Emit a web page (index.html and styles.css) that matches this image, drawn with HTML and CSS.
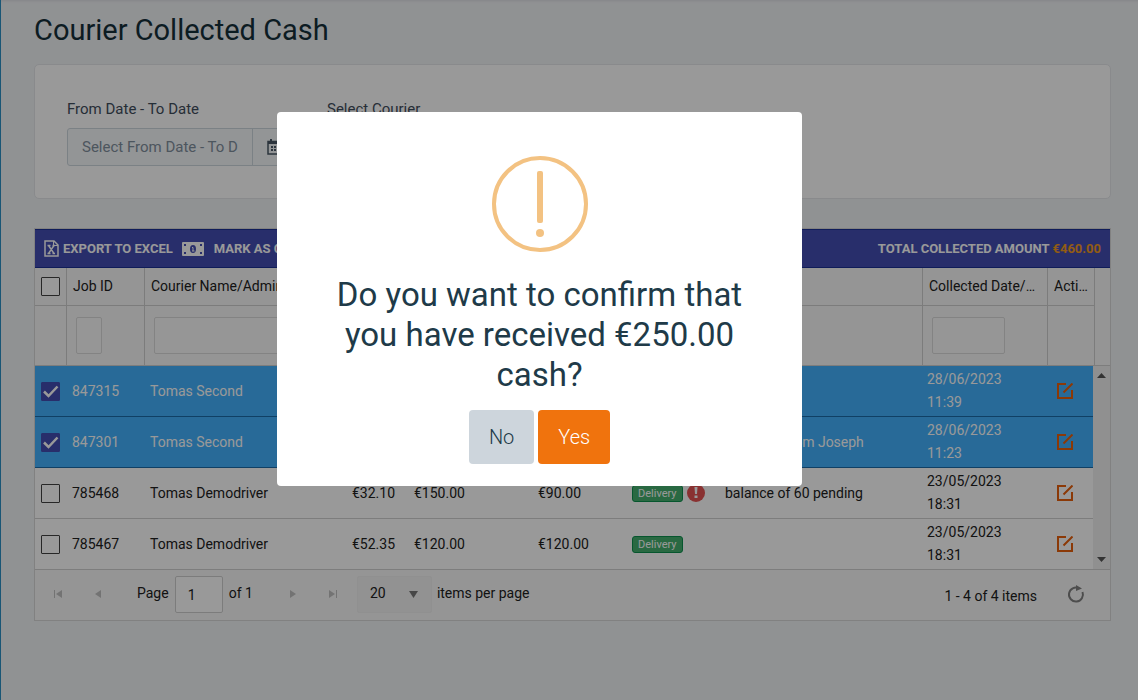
FILE: index.html
```html
<!DOCTYPE html>
<html lang="en">
<head>
<meta charset="utf-8">
<meta name="viewport" content="width=device-width, initial-scale=1">
<title>Courier Collected Cash</title>
<link rel="stylesheet" href="styles.css">
</head>
<body>
<svg class="sprite" aria-hidden="true">
  <symbol id="edit" viewBox="0 0 16 16"><path d="M9 1H1v14h14V7M6.500 9.500l9-9" fill="none" stroke="currentColor" stroke-width="2"/></symbol>
  <symbol id="prev" viewBox="0 0 16 16"><path d="M11 4v8L5 8z" fill="currentColor"/></symbol>
  <symbol id="first" viewBox="0 0 16 16"><path d="M12 4v8L6 8zM4 4h1v8H4z" fill="currentColor"/></symbol>
</svg>
<main class="page">
  <h1 class="title">Courier Collected Cash</h1>

  <form class="card filters">
    <div class="field">
      <label for="dates">From Date - To Date</label>
      <div class="date-group">
        <input id="dates" class="date-input" type="text" placeholder="Select From Date - To Date">
        <button class="date-btn" type="button" aria-label="Open calendar">
          <svg width="15" height="16" viewBox="0 0 15 16"><path d="M1 2.500h13v12.500H1z" fill="none" stroke="currentColor" stroke-width="1.500"/><path d="M1 2h13v3H1zM3 0h2v3H3zM10 0h2v3h-2zM4 7h2v2H4zM7 7h2v2H7zM10 7h2v2h-2zM4 10h2v2H4zM7 10h2v2H7zM10 10h2v2h-2z" fill="currentColor"/></svg>
        </button>
      </div>
    </div>
    <div class="field">
      <label for="courier">Select Courier</label>
      <select id="courier" class="courier"><option></option></select>
    </div>
    <button class="search" type="button" aria-label="Search"></button>
  </form>

  <section class="grid">
    <div class="toolbar">
      <button class="tool" type="button">
        <svg width="15" height="17" viewBox="0 0 15 17"><path d="M1 1h9l4 4v11H1z" fill="none" stroke="currentColor" stroke-width="1.500"/><path d="M9.500 1v4.500H14" fill="none" stroke="currentColor"/><path d="M4.500 5.500l5.500 8M10 5.500l-5.500 8M3.500 5.500h3M8.500 5.500h2.500M3.500 13.500h3M8.500 13.500h2.500" fill="none" stroke="currentColor" stroke-width="1.400"/></svg>
        Export to Excel
      </button>
      <button class="tool tool-cash" type="button">
        <svg width="22" height="14" viewBox="0 0 22 14"><rect width="22" height="14" rx="1" fill="currentColor"/><ellipse cx="11" cy="7" rx="3" ry="4" fill="#434eb2"/><path d="M10 5.500h1V9M10 9h2.500" fill="none" stroke="currentColor"/><path d="M2 2h2v2H2zM18 2h2v2h-2zM2 10h2v2H2zM18 10h2v2h-2z" fill="#434eb2"/></svg>
        Mark as Collected
      </button>
      <div class="total">Total Collected Amount <span class="amount">€460.00</span></div>
    </div>

    <div class="head-wrap">
      <table class="tbl">
        <colgroup><col class="c-check"><col class="c-id"><col class="c-name"><col class="c-a"><col class="c-b"><col class="c-c"><col class="c-type"><col class="c-note"><col class="c-date"><col class="c-act"></colgroup>
        <thead>
          <tr class="heads">
            <th><input class="check" type="checkbox" aria-label="Select all"></th>
            <th>Job ID</th><th>Courier Name/Admin</th><th></th><th></th><th></th><th></th><th></th><th>Collected Date/Time</th><th>Action</th>
          </tr>
          <tr class="filter-row">
            <td></td>
            <td><input class="filter filter-id" type="text" aria-label="Filter Job ID"></td>
            <td><input class="filter" type="text" aria-label="Filter courier name"></td>
            <td></td><td></td><td></td><td></td><td></td>
            <td><input class="filter filter-date" type="text" aria-label="Filter collected date"></td>
            <td></td>
          </tr>
        </thead>
      </table>
    </div>

    <div class="body-wrap">
      <table class="tbl rows">
        <colgroup><col class="c-check"><col class="c-id"><col class="c-name"><col class="c-a"><col class="c-b"><col class="c-c"><col class="c-type"><col class="c-note"><col class="c-date"><col class="c-act"></colgroup>
        <tbody>
          <tr class="selected">
            <td><input class="check" type="checkbox" checked aria-label="Select 847315"></td><td>847315</td><td>Tomas Second</td><td></td><td></td><td></td><td></td><td></td>
            <td class="date">28/06/2023 11:39</td><td class="act"><a href="#" aria-label="Edit 847315"><svg width="16" height="16"><use href="#edit"/></svg></a></td>
          </tr>
          <tr class="selected">
            <td><input class="check" type="checkbox" checked aria-label="Select 847301"></td><td>847301</td><td>Tomas Second</td><td></td><td></td><td></td><td></td><td>Received from Joseph</td>
            <td class="date">28/06/2023 11:23</td><td class="act"><a href="#" aria-label="Edit 847301"><svg width="16" height="16"><use href="#edit"/></svg></a></td>
          </tr>
          <tr>
            <td><input class="check" type="checkbox" aria-label="Select 785468"></td><td>785468</td><td>Tomas Demodriver</td><td>€32.10</td><td>€150.00</td><td>€90.00</td>
            <td><div class="type"><span class="badge">Delivery</span><svg width="18" height="18" viewBox="0 0 18 18"><circle cx="9" cy="9" r="9" fill="#e55353"/><path d="M7.500 3h3l-.5 7H8zM7.500 11.500h3v2.500h-3z" fill="#fff"/></svg></div></td>
            <td>balance of 60 pending</td>
            <td class="date">23/05/2023 18:31</td><td class="act"><a href="#" aria-label="Edit 785468"><svg width="16" height="16"><use href="#edit"/></svg></a></td>
          </tr>
          <tr>
            <td><input class="check" type="checkbox" aria-label="Select 785467"></td><td>785467</td><td>Tomas Demodriver</td><td>€52.35</td><td>€120.00</td><td>€120.00</td>
            <td><div class="type"><span class="badge">Delivery</span></div></td><td></td>
            <td class="date">23/05/2023 18:31</td><td class="act"><a href="#" aria-label="Edit 785467"><svg width="16" height="16"><use href="#edit"/></svg></a></td>
          </tr>
        </tbody>
      </table>
      <div class="scroll" aria-hidden="true">
        <svg width="9" height="5" viewBox="0 0 9 5"><path d="M0 5h9L4.500 0z" fill="currentColor"/></svg>
        <svg width="9" height="5" viewBox="0 0 9 5"><path d="M0 0h9L4.500 5z" fill="currentColor"/></svg>
      </div>
    </div>

    <div class="pager">
      <button class="nav" type="button" aria-label="First page"><svg width="16" height="16"><use href="#first"/></svg></button>
      <button class="nav" type="button" aria-label="Previous page"><svg width="16" height="16"><use href="#prev"/></svg></button>
      <label class="page-label" for="pageno">Page</label>
      <input id="pageno" class="page-no" type="text" value="1">
      <span class="of">of 1</span>
      <button class="nav next" type="button" aria-label="Next page"><svg width="16" height="16"><use href="#prev"/></svg></button>
      <button class="nav next" type="button" aria-label="Last page"><svg width="16" height="16"><use href="#first"/></svg></button>
      <select id="size" class="size"><option>20</option></select>
      <label class="size-label" for="size">items per page</label>
      <span class="info">1 - 4 of 4 items</span>
      <button class="refresh" type="button" aria-label="Refresh"><svg width="18" height="18" viewBox="0 0 18 18"><path d="M12 3.200A7 7 0 1 0 15.500 7" fill="none" stroke="currentColor" stroke-width="2"/><path d="M9 0l6 3.500L9 6z" fill="currentColor"/></svg></button>
    </div>
  </section>
</main>

<div class="overlay">
  <div class="modal" role="dialog" aria-modal="true" aria-labelledby="question">
    <svg class="warn" width="96" height="96" viewBox="0 0 96 96"><circle cx="48" cy="48" r="46" fill="none" stroke="#f3c282" stroke-width="4"/><rect x="45" y="15" width="6" height="52" rx="2" fill="#f3c282"/><circle cx="48" cy="77" r="4" fill="#f3c282"/></svg>
    <h2 id="question" class="question">Do you want to confirm that you have received €250.00 cash?</h2>
    <div class="actions">
      <button class="btn btn-no" type="button">No</button>
      <button class="btn btn-yes" type="button">Yes</button>
    </div>
  </div>
</div>
</body>
</html>
```
FILE: styles.css
```css
* { box-sizing: border-box; }
body {
  margin: 0;
  min-height: 100vh;
  background: #f1f3f6;
  border-left: 1px solid #2b8fc4;
  color: #212529;
  font: 14px/23px Roboto, sans-serif;
}
button, input, select { font: inherit; color: inherit; margin: 0; }
button { cursor: pointer; }
.sprite { display: none; }
.page { padding: 10px 27px 40px 33px; box-shadow: inset 0 3px 3px -2px #dcdee2; }
.title { margin: 0 0 14px; font-size: 29px; line-height: 40px; font-weight: 400; color: #15303a; }

.card { background: #fff; border: 1px solid #e4e7ea; border-radius: 5px; }
.filters { display: flex; align-items: flex-start; min-height: 135px; padding: 32px; gap: 30px; margin-bottom: 29px; font-size: 15px; color: #3f4d5c; }
.field { width: 230px; }
.field label { display: block; padding-top: 1px; margin-bottom: 7px; }
.date-group { display: flex; height: 38px; border: 1px solid #cdd7de; border-radius: 3px; background: #f5f8fa; }
.date-input { flex: 1; min-width: 0; padding: 0 14px; border: 0; background: none; }
.date-input::placeholder { color: #818f9d; opacity: 1; }
.date-btn { width: 44px; padding: 0; border: 0; border-left: 1px solid #cdd7de; background: none; color: #4a5866; display: flex; align-items: center; justify-content: center; }
.courier { display: block; width: 100%; height: 38px; border: 1px solid #cdd7de; border-radius: 3px; background: #f5f8fa; }
.search { width: 120px; height: 38px; margin: 31px 0 0 81px; border: 1px solid #000; border-radius: 3px; background: #0b1220; }

.grid { border: 1px solid #d8d8d8; background: #fff; color: #212121; }
.toolbar { display: flex; align-items: center; gap: 9px; height: 39px; padding: 0 9px; border: 1px solid #1a2f94; border-width: 1px 0; background: #434eb2; color: #fff; font-size: 13px; font-weight: 700; text-transform: uppercase; }
.tool { display: flex; align-items: center; gap: 4px; padding: 0; border: 0; background: none; text-transform: inherit; }
.tool-cash { gap: 10px; }
.total { margin-left: auto; }
.amount { color: #f39a1e; }

.tbl { width: 100%; table-layout: fixed; border-collapse: separate; border-spacing: 0; }
.c-check { width: 32px; } .c-id { width: 78px; } .c-name { width: 202px; } .c-a { width: 62px; }
.c-b { width: 124px; } .c-c { width: 94px; } .c-type { width: 93px; } .c-date { width: 125px; } .c-act { width: 47px; }
.tbl th, .tbl td { padding: 0 5px; text-align: left; font-weight: 400; }
.check { appearance: none; display: block; width: 19px; height: 19px; margin: 0 1px; border: 1px solid #424242; border-radius: 1px; background: #fff; }
.check:checked { border-color: #434eb2; background: #434eb2 url("data:image/svg+xml,%3Csvg xmlns='http://www.w3.org/2000/svg' viewBox='0 0 17 17'%3E%3Cpath d='M2 8.500l4.500 4.500L15.500 3.500' fill='none' stroke='white' stroke-width='2.500'/%3E%3C/svg%3E"); }

.head-wrap { padding-right: 15px; background: #f9f9f9; border-bottom: 1px solid #d0d0d0; }
.head-wrap th, .head-wrap td { border-right: 1px solid #cfcfcf; }
.tbl .heads th { height: 38px; padding: 0 5px 0 6px; border-bottom: 1px solid #cfcfcf; white-space: nowrap; overflow: hidden; text-overflow: ellipsis; }
.tbl .filter-row td { height: 59px; padding: 0 9px; }
.filter { display: block; width: 100%; height: 37px; border: 1px solid #dadada; border-radius: 2px; background: #fbfbfb; }
.filter-id { width: 26px; }
.filter-date { width: 73px; }
.heads .check { margin: 0; }

.body-wrap { display: flex; }
.rows { flex: 1; }
.rows td { height: 51px; border-bottom: 1px solid #d0d0d0; }
.rows td:first-child { padding: 0 5px; }
.rows .c-act { width: 46px; }
.selected { background: #44b1fd; color: #fff; }
.rows .selected td { border-bottom-color: #1c6ca8; }
.tbl .date { padding-right: 40px; }
.tbl .act { padding: 0 10px; color: #e8600c; }
.act a { display: block; height: 16px; color: inherit; }
.act svg { display: block; }
.type { display: flex; align-items: center; gap: 4px; }
.badge { padding: 0 5px; border: 1px solid #0b8f4d; border-radius: 3px; background: #45b06f; color: #fff; font-size: 11px; line-height: 15px; }
.scroll { width: 17px; display: flex; flex-direction: column; justify-content: space-between; align-items: center; padding: 7px 0; background: #f1f1f1; color: #555; border-bottom: 1px solid #d0d0d0; }

.pager { display: flex; align-items: center; height: 50px; padding: 0 25px 2px 11px; background: #f9f9f9; }
.nav { display: flex; justify-content: center; width: 24px; padding: 0; margin-right: 16px; border: 0; background: none; color: #c0c0c0; }
.next svg { transform: scaleX(-1); }
.page-label { margin: 0 6px 0 11px; }
.page-label, .of, .size-label { padding-bottom: 2px; }
.page-no { width: 48px; height: 37px; padding: 2px 12px 0; border: 1px solid #cfcfcf; border-radius: 2px; background: #fff; }
.of { margin: 0 28px 0 6px; }
.next + .next { margin-right: 12px; }
.size { appearance: none; width: 75px; height: 37px; margin-right: 5px; padding: 0 13px 2px 12px; border: 1px solid #f1f1f1; border-radius: 2px; background: #f3f3f3 url("data:image/svg+xml,%3Csvg xmlns='http://www.w3.org/2000/svg' width='9' height='7'%3E%3Cpath d='M0 0h9L4.500 7z' fill='%23777'/%3E%3C/svg%3E") no-repeat right 13px center; }
.info { margin: 4px 30px 0 auto; }
.refresh { display: flex; padding: 0; border: 0; background: none; color: #808080; }

.overlay { position: fixed; inset: 0; display: flex; justify-content: center; align-items: flex-start; padding: 112px 59px 0 0; background: rgba(0, 0, 0, .4); }
.modal { width: 525px; max-width: 100%; padding: 44px 48px 22px; border-radius: 4px; background: #fff; text-align: center; }
.warn { display: block; margin: 0 auto 23px; }
.question { margin: 0 0 15px; font-size: 33px; line-height: 40px; font-weight: 400; color: #203a48; }
.actions { display: flex; justify-content: center; gap: 4px; }
.btn { height: 54px; padding: 0 20px; border: 0; border-radius: 4px; font-size: 20px; font-weight: 300; }
.btn-no { background: #cdd5dc; color: #203a48; }
.btn-yes { background: #f0730d; color: #fff; }
```
